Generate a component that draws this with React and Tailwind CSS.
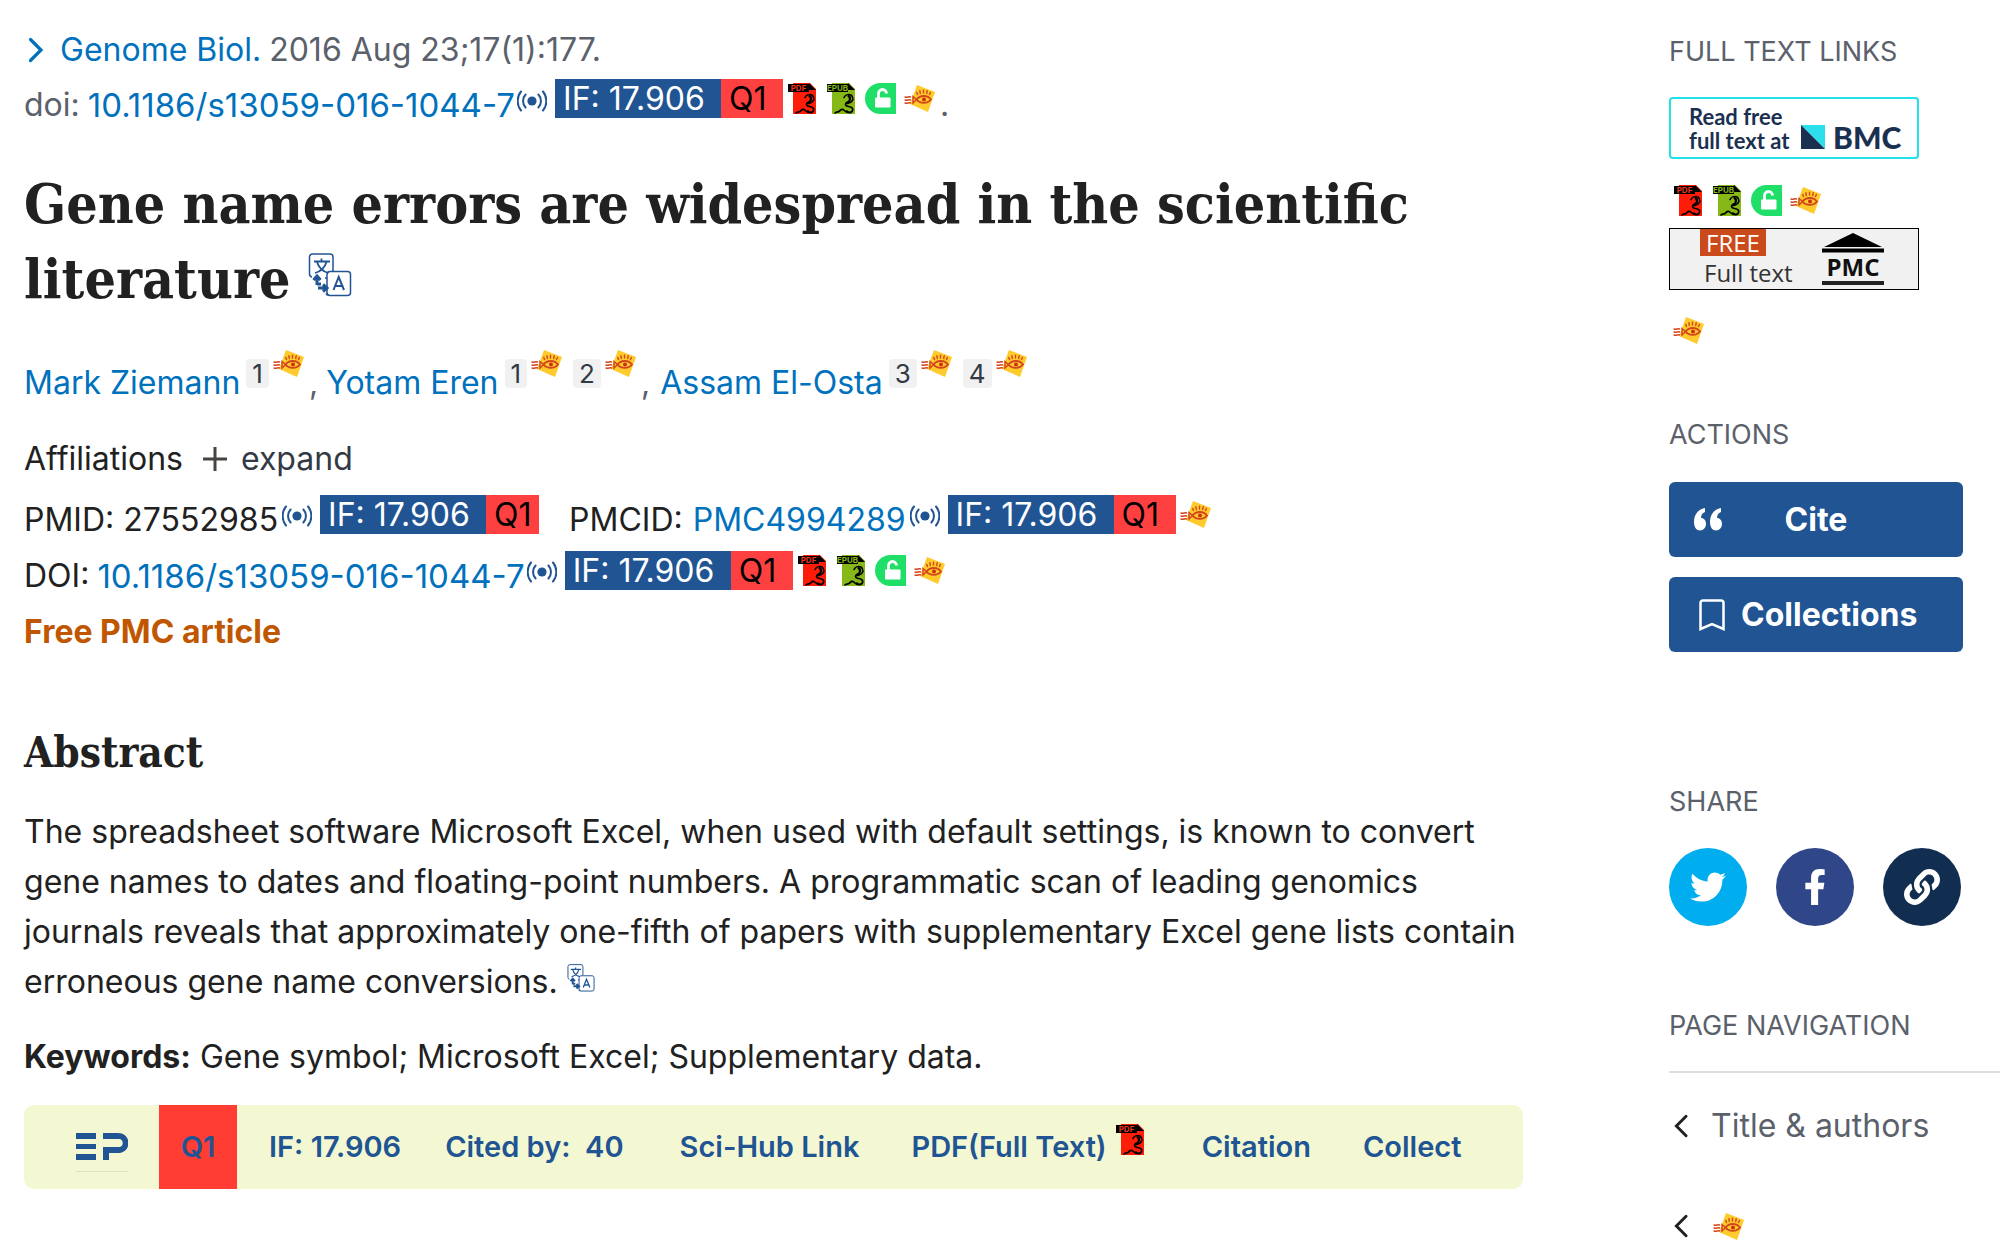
import { FaTwitter, FaFacebookF, FaLink } from "react-icons/fa";

const link = "text-[#0071bc]";

function Signal() {
  return (
    <svg className="h-6 w-[30px] shrink-0" viewBox="0 0 30 24" fill="none" stroke="#205493" strokeWidth="2" strokeLinecap="round" aria-hidden="true">
      <circle cx="15" cy="12" r="4.6" fill="#205493" stroke="none" />
      <path d="M8.6 5.500a9.500 9.500 0 0 0 0 13M4 2.500a15 15 0 0 0 0 19M21.400 5.500a9.500 9.500 0 0 1 0 13M26 2.500a15 15 0 0 1 0 19" />
    </svg>
  );
}

function FileIcon({ label, color, labelColor }) {
  return (
    <svg className="size-[31px] shrink-0" viewBox="0 0 31 31" role="img" aria-label={label}>
      <path d="M6 0h17l6 6v25H6z" fill={color} />
      <path d="M22 0l7 7h-7z" fill="#000" />
      <rect x="1" y="1" width="21" height="8" fill="#000" />
      <text x="11.5" y="8" fontSize="8" fontWeight="700" textAnchor="middle" fill={labelColor} fontFamily="Inter, sans-serif">{label}</text>
      <path d="M18 14.500c1-2.500 4-3.500 7-2.500 1.500 1 2 2.500 2 4.500-1 2.500-3 3.500-5.500 4" fill="none" stroke="#000" strokeWidth="1.600" strokeLinecap="round" />
      <path d="M22 12.500c3 2 2.500 5-.5 8" fill="none" stroke="#000" strokeWidth="2.200" />
      <path d="M21.500 19c-3 2-2.500 4 1 4.500 4 .5 5 2.500 3.500 5-2 1.500-4 .5-5-.5M25 29.500c-4 1-6-1-8-3-2-1-2.500 1-4 2-1 .5-2.500 0-4 1.500" fill="none" stroke="#000" strokeWidth="1.700" strokeLinecap="round" />
    </svg>
  );
}
const Pdf = () => <FileIcon label="PDF" color="#ff1d0a" labelColor="#f0341c" />;
const Epub = () => <FileIcon label="EPUB" color="#86b817" labelColor="#86b817" />;

function Unlock() {
  return (
    <svg className="size-[31px] shrink-0" viewBox="0 0 31 31" aria-hidden="true">
      <path d="M15.5 0H31v31H15.5a15.5 15.5 0 0 1 0-31z" fill="#20df69" />
      <rect x="10" y="14.500" width="15.500" height="10" rx="1" fill="#fff" />
      <path d="M13.500 15v-4.500a4 4 0 0 1 8 0" fill="none" stroke="#fff" strokeWidth="2.800" />
    </svg>
  );
}

function Eye() {
  return (
    <svg className="h-[31px] w-8 shrink-0" viewBox="0 0 32 31" fill="none" aria-hidden="true">
      <path d="M13 2l18 7-7 20-18-8z" fill="#ffca2c" />
      <g stroke="#d2451e" strokeWidth="1.400" strokeLinecap="round">
        <path d="M12.500 16.500c3.500-4.500 11-4.800 14.500 0-3.500 4.500-11 4.500-14.500 0z" strokeWidth="1.800" />
        <path d="M13.500 11.500l-.7-2M16.300 10.500l-.4-2.700M19.500 10V7.300M22.700 10.500l.5-2.700M25.500 11.500l.9-2" />
        <path d="M12.500 16.500l-3.500-3v6.500z" />
        <path d="M6.500 14c-2-1-3 1-5.500 0M6.500 17c-2-1-3 1-5.500 0M6.500 20c-2-1-3 1-5.500 0" />
      </g>
      <circle cx="20" cy="16.500" r="2" fill="#c8320f" />
    </svg>
  );
}

function Translate({ className }) {
  return (
    <svg className={className} viewBox="0 0 44 44" fill="none" stroke="#205493" aria-hidden="true">
      <path d="M4 24a3 3 0 0 1-2.500-3V4a3 3 0 0 1 3-3H22a3 3 0 0 1 3 3v14M17 25h2M21 42h-1a2 2 0 0 1-2-1.500" strokeWidth="1.500" />
      <rect x="19" y="18.500" width="23.500" height="24" rx="3" strokeWidth="1.500" />
      <path d="M6 8.500h16M13.500 5.500v3M18.500 9c-1.500 5-6 9.500-11.500 11M9 9c1.500 5 6 9.500 11.500 11" strokeWidth="1.800" />
      <path d="M25.500 37l5.200-13 5.300 13M27.300 33h7" strokeWidth="2" />
      <path d="M9 32v-8M5.500 27L9 23l3.500 4M9 31h4M10 35h8M15 31.500l4 3.500-4 3.500" strokeWidth="3" />
    </svg>
  );
}

function Chevron({ left, className }) {
  return (
    <svg className={className} viewBox="0 0 16 26" fill="none" stroke="currentColor" strokeWidth="3.200" strokeLinecap="round" aria-hidden="true">
      <path d={left ? "M13.500 2.500L3 13l10.500 10.500" : "M2.500 2.500L13 13 2.500 23.500"} />
    </svg>
  );
}

function Impact({ tight, children }) {
  return (
    <span className="flex items-center gap-2 pb-3">
      <span className="flex h-[39px] items-center leading-[39px]">
        <span className="w-[166px] bg-[#205493] pl-2 text-white">IF: 17.906</span>
        <span className={tight ? "w-[53px] bg-[#ff4040] pl-2 text-black" : "w-[62px] bg-[#ff4040] pl-2 text-black"}>Q1</span>
      </span>
      {children}
    </span>
  );
}

function Files() {
  return (
    <span className="-ml-1 flex items-center gap-2">
      <Pdf /><Epub /><Unlock /><Eye />
    </span>
  );
}

function Ref({ n }) {
  return (
    <sup className="static flex items-center gap-1">
      <a href="#affiliations" className="mb-5 rounded bg-[#f1f1f1] px-1.5 text-[26px] leading-[29px] text-[#323a45]">{n}</a>
      <span className="mb-10"><Eye /></span>
    </sup>
  );
}

function SideHeading({ children }) {
  return <h2 className="text-[27px] leading-9 text-[#5b616b]">{children}</h2>;
}

function Article() {
  return (
    <main className="min-w-0 flex-1 pt-[22px] pl-6 text-[32px] leading-[50px]">
      <div className="text-[#5b616b]">
        <div className="flex h-[55px] items-center gap-2">
          <button className={`flex items-center gap-4 ${link}`}>
            <Chevron className="ml-1 h-[26px] w-4" />
            Genome Biol.
          </button>
          <span>2016 Aug 23;17(1):177.</span>
        </div>
        <div className="flex h-[55px] items-center">
          <span className="mr-2">doi:</span>
          <a href="#doi" className={`text-[33px] ${link}`}>10.1186/s13059-016-1044-7</a>
          <span className="mr-2 ml-0.5 pb-2"><Signal /></span>
          <Impact><Files /></Impact>
          <span className="ml-1">.</span>
        </div>
      </div>

      <h1 className="mt-[34px] font-['DejaVu_Serif_Condensed','DejaVu_Serif',serif] text-[55px] leading-[75px] font-bold">
        Gene name errors are widespread in the scientific literature{" "}
        <Translate className="inline size-11 align-[1px]" />
      </h1>

      <div className="mt-[42px] flex h-[50px] items-center text-[#5b616b]">
        <a href="#ziemann" className={`mr-1.5 ${link}`}>Mark Ziemann</a>
        <Ref n="1" />
        <span className="mr-2 ml-1">,</span>
        <a href="#eren" className={`mr-1.5 ${link}`}>Yotam Eren</a>
        <span className="flex gap-2.5"><Ref n="1" /><Ref n="2" /></span>
        <span className="mr-2.5 ml-1">,</span>
        <a href="#osta" className={`mr-1.5 ${link}`}>Assam El-Osta</a>
        <span className="flex gap-2.5"><Ref n="3" /><Ref n="4" /></span>
      </div>

      <div className="mt-[26px] flex h-[50px] items-center">
        <span>Affiliations</span>
        <button className="ml-5 flex items-center gap-3.5 text-[#323a45]">
          <svg className="size-6" viewBox="0 0 24 24" stroke="#494440" strokeWidth="3" aria-hidden="true"><path d="M12 0v24M0 12h24" /></svg>
          expand
        </button>
      </div>

      <ul className="mt-2 leading-[56px]">
        <li className="flex h-14 items-center">
          <span>PMID: 27552985</span>
          <span className="mr-2 ml-1 pb-2"><Signal /></span>
          <Impact tight />
          <span className="mr-2.5 ml-[30px]">PMCID:</span>
          <a href="#pmc" className={link}>PMC4994289</a>
          <span className="mr-2 ml-1 pb-2"><Signal /></span>
          <Impact><span className="-ml-1"><Eye /></span></Impact>
        </li>
        <li className="flex h-14 items-center">
          <span className="mr-2">DOI:</span>
          <a href="#doi" className={`text-[33px] ${link}`}>10.1186/s13059-016-1044-7</a>
          <span className="mr-2 ml-0.5 pb-2"><Signal /></span>
          <Impact><Files /></Impact>
        </li>
        <li className="font-bold text-[#c05600]">Free PMC article</li>
      </ul>

      <h2 className="mt-[63px] font-['DejaVu_Serif_Condensed','DejaVu_Serif',serif] text-[42px] leading-[60px] font-bold">Abstract</h2>
      <p className="mt-6">
        The spreadsheet software Microsoft Excel, when used with default settings, is known to convert gene names to dates and floating-point numbers. A programmatic scan of leading genomics journals reveals that approximately one-fifth of papers with supplementary Excel gene lists contain erroneous gene name conversions.{" "}
        <Translate className="inline size-7 align-[1px]" />
      </p>
      <p className="mt-[25px]"><strong className="font-bold">Keywords:</strong> Gene symbol; Microsoft Excel; Supplementary data.</p>

      <div className="mt-[23px] flex h-[84px] items-center overflow-hidden rounded-[10px] bg-[#f3f8d2] text-[29px] font-semibold text-[#205493]">
        <div className="flex w-[135px] justify-center pl-5">
          <svg className="h-[60px] w-[52px]" viewBox="0 0 52 60" fill="#205493" aria-label="EP" role="img">
            <rect y="16" width="20" height="6" /><rect y="27" width="20" height="5" /><rect y="37" width="20" height="6" />
            <path d="M27 16h15c14 0 14 20 0 20h-9v7h-6V30h16c5 0 5-8 0-8H27z" />
            <rect y="54" width="52" height="1" fill="#dde3c0" />
          </svg>
        </div>
        <div className="flex h-full w-[78px] items-center justify-center bg-[#ff3d33]">Q1</div>
        <a href="#if" className="ml-8">IF: 17.906</a>
        <a href="#cited" className="ml-11 whitespace-pre">Cited by:  40</a>
        <a href="#scihub" className="ml-14">Sci-Hub Link</a>
        <a href="#pdf" className="ml-[52px] flex items-center gap-2">PDF(Full Text)<span className="pb-4"><Pdf /></span></a>
        <a href="#citation" className="ml-14">Citation</a>
        <a href="#collect" className="ml-[52px]">Collect</a>
      </div>
    </main>
  );
}

function Sidebar() {
  return (
    <aside className="w-[331px] shrink-0 pt-[34px]">
      <SideHeading>FULL TEXT LINKS</SideHeading>
      <a href="#bmc" className="mt-[27px] flex h-[62px] w-[250px] items-center rounded border-2 border-[#22dfe8] pt-0.5 pl-[18px] text-[#1b3051]">
        <span className="w-28 font-['Lato',sans-serif] text-[22px] leading-6 font-bold whitespace-nowrap">Read free<br />full text at</span>
        <svg className="mt-4 size-6" viewBox="0 0 24 24" aria-hidden="true"><path d="M0 0h24v24z" fill="#2be0ec" /><path d="M0 0v24h24z" fill="#1b3051" /></svg>
        <span className="mt-4 ml-2 font-['Lato',sans-serif] text-[30px] leading-8 font-black">BMC</span>
      </a>
      <div className="mt-[26px] ml-1 flex items-center gap-2"><Pdf /><Epub /><Unlock /><Eye /></div>
      <a href="#pmc" className="mt-3 flex h-[62px] w-[250px] items-center justify-between border border-black bg-[#f1f1f1] pr-[34px] pl-[30px] font-['Open_Sans',sans-serif] text-2xl text-[#333]">
        <span className="flex flex-col items-start">
          <span className="bg-[#cb4a1b] px-1.5 leading-[27px] text-white">FREE</span>
          <span className="pl-1 leading-[33px]">Full text</span>
        </span>
        <span className="flex flex-col items-center">
          <svg className="h-5 w-[62px]" viewBox="0 0 62 20" aria-hidden="true"><path d="M31 0l29 14H2zM0 15.500h62v4H0z" /></svg>
          <span className="text-2xl leading-[28px] font-bold text-[#111]">PMC</span>
          <span className="h-1 w-[62px] bg-[#222]" />
        </span>
      </a>
      <div className="mt-[25px] ml-1"><Eye /></div>

      <div className="mt-[71px]"><SideHeading>ACTIONS</SideHeading></div>
      <div className="mt-[29px] flex w-[294px] flex-col gap-5 text-[32px] font-bold text-white">
        <button className="relative flex h-[75px] items-center justify-center rounded-md bg-[#205493]">
          <svg className="absolute left-[25px] h-[23px] w-7" viewBox="0 0 28 23" fill="#fff" aria-hidden="true">
            <path d="M11 0v4C8 5 7 7.500 7 10c3 0 5 2.500 5 6s-2.500 6.500-6 6.500S0 19 0 14C0 7 4 1 11 0zM27 0v4c-3 1-4 3.500-4 6 3 0 5 2.500 5 6s-2.500 6.500-6 6.500-6-3.500-6-8.500C16 7 20 1 27 0z" />
          </svg>
          Cite
        </button>
        <button className="flex h-[75px] items-center gap-4 rounded-md bg-[#205493] pl-[30px]">
          <svg className="h-8 w-[26px]" viewBox="0 0 26 32" fill="none" stroke="#fff" strokeWidth="2.500" aria-hidden="true"><path d="M1.500 30V4a2.500 2.500 0 0 1 2.500-2.500h18A2.500 2.500 0 0 1 24.500 4v26L13 25z" /></svg>
          Collections
        </button>
      </div>

      <div className="mt-[132px]"><SideHeading>SHARE</SideHeading></div>
      <div className="mt-7 flex gap-[29px] text-4xl text-white">
        <a href="#twitter" aria-label="Twitter" className="flex size-[78px] items-center justify-center rounded-full bg-[#00aeef]"><FaTwitter /></a>
        <a href="#facebook" aria-label="Facebook" className="flex size-[78px] items-center justify-center rounded-full bg-[#2f4689]"><FaFacebookF /></a>
        <a href="#permalink" aria-label="Permalink" className="flex size-[78px] items-center justify-center rounded-full bg-[#112e51]"><FaLink /></a>
      </div>

      <div className="mt-[82px]"><SideHeading>PAGE NAVIGATION</SideHeading></div>
      <nav className="mt-[27px] border-t-2 border-[#dcdee0] text-[32px] leading-[50px] text-[#5b616b]">
        <a href="#title" className="mt-7 flex items-center gap-[22px]">
          <Chevron left className="ml-1 h-6 w-4 text-[#212121]" />
          Title &amp; authors
        </a>
        <a href="#abstract" className="mt-[50px] flex h-[50px] items-center gap-6" aria-label="Abstract">
          <Chevron left className="ml-1 h-6 w-4 text-[#212121]" />
          <Eye />
        </a>
      </nav>
    </aside>
  );
}

export default function App() {
  return (
    <div className="flex h-screen gap-[146px] overflow-hidden bg-white font-['Inter',sans-serif] text-[#212121]">
      <Article />
      <Sidebar />
    </div>
  );
}
